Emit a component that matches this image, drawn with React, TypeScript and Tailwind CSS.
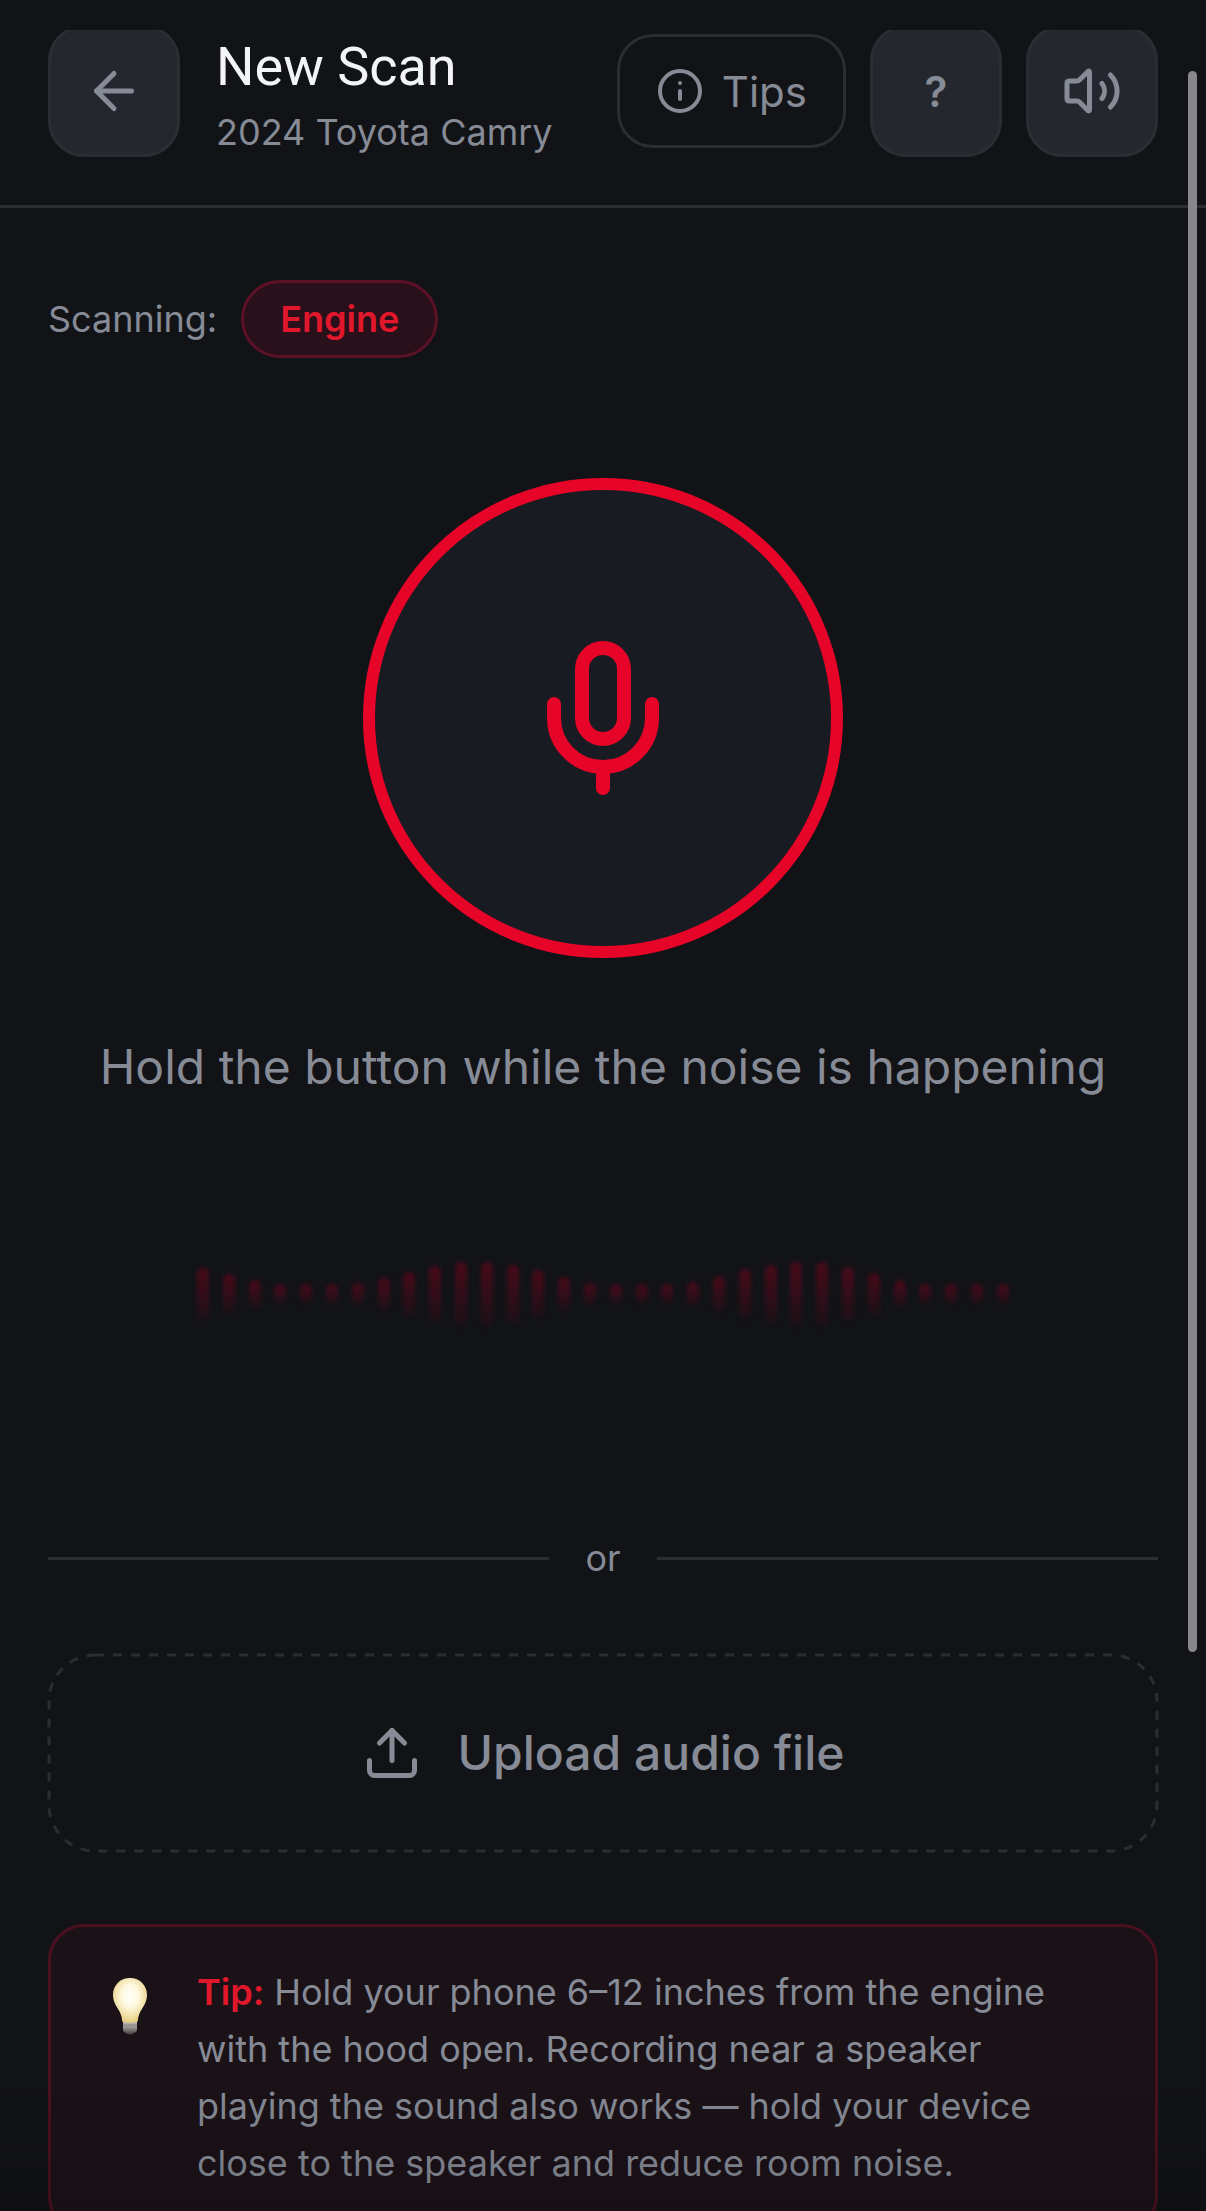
import { ArrowLeft, Info, Mic, Upload } from "lucide-react";

// Bar heights of the idle waveform, left to right.
const BARS = [
  52, 40, 28, 20, 20, 20, 22, 32, 44, 56, 64, 64, 58, 48, 34, 22,
  20, 20, 20, 24, 36, 50, 58, 64, 64, 54, 42, 28, 20, 20, 20, 20,
];

const iconButton =
  "flex size-[132px] shrink-0 items-center justify-center rounded-[36px] border-3 border-[#2b2d33] bg-[#24272e]";

function VolumeIcon() {
  return (
    <svg
      viewBox="0 0 60 60"
      className="size-[60px]"
      fill="none"
      stroke="currentColor"
      strokeWidth="5"
      strokeLinecap="round"
      strokeLinejoin="round"
      aria-hidden="true"
    >
      <path d="M26 10.400 17.400 19Q16.400 20 15 20H7.500Q5 20 5 22.500V37.500Q5 40 7.500 40H15Q16.400 40 17.400 41L26 49.600Q27.500 50.600 27.500 48.800V11.200Q27.500 9.400 26 10.400Z" />
      <path d="M40 22.500a12.500 12.500 0 0 1 0 15" />
      <path d="M48.400 14a22.500 22.500 0 0 1 0 32" />
    </svg>
  );
}

function BulbIcon() {
  return (
    <svg viewBox="0 0 62 62" className="mt-3 size-[62px] shrink-0" aria-hidden="true">
      <defs>
        <radialGradient id="glass" cx="0.5" cy="0.4" r="0.6">
          <stop offset="0" stopColor="#fffefa" />
          <stop offset="0.4" stopColor="#fefae0" />
          <stop offset="1" stopColor="#e6cc7e" />
        </radialGradient>
        <linearGradient id="base" x1="0" y1="0" x2="0" y2="1">
          <stop offset="0" stopColor="#cfcac4" />
          <stop offset="0.6" stopColor="#8d8988" />
          <stop offset="1" stopColor="#3b373a" />
        </linearGradient>
      </defs>
      <path d="M24 44h14v9q0 3-3 4l-2 1.500h-4L27 57q-3-1-3-4Z" fill="url(#base)" />
      <path d="M24 49h14M24 53h14" stroke="#77726f" strokeWidth="1" opacity="0.6" />
      <path
        d="M31 2C21 2 14 9.500 14 19c0 10 7 14 8.600 22 .4 2 .6 3 .6 4.500 7.600 1.800 8 1.800 15.600 0 0-1.500.2-2.500.6-4.500C41 33 48 29 48 19 48 9.500 41 2 31 2Z"
        fill="url(#glass)"
      />
    </svg>
  );
}

function Header() {
  return (
    <header className="overflow-hidden border-b-3 border-[#2b2d31] px-12 pb-12">
      <div className="-mt-[5px] flex items-center gap-6">
        <button type="button" aria-label="Back" className={iconButton}>
          <ArrowLeft size={60} strokeWidth={2} />
        </button>
        <div className="ml-3 min-w-0 flex-1">
          <h1 className="font-[Roboto,sans-serif] text-[54px] leading-[82px] text-[#f3f4f8]">
            New Scan
          </h1>
          <p className="text-4xl leading-12">2024 Toyota Camry</p>
        </div>
        <button
          type="button"
          className="flex h-[114px] shrink-0 items-center gap-[18px] rounded-[36px] border-3 border-[#2b2d31] px-9 text-[42px]"
        >
          <Info size={48} strokeWidth={2} />
          Tips
        </button>
        <button type="button" aria-label="Help" className={iconButton}>
          <span className="text-[42px] font-semibold">?</span>
        </button>
        <button type="button" aria-label="Sound" className={iconButton}>
          <VolumeIcon />
        </button>
      </div>
    </header>
  );
}

function Waveform() {
  return (
    <div className="mt-[70px] flex h-60 w-[812px] items-center justify-between self-center blur-[2px]">
      {BARS.map((height, i) => (
        <div
          key={i}
          className="w-3 rounded-full bg-linear-to-b from-[#4a0a1a] to-[#4a0a1a]/20"
          style={{ height }}
        />
      ))}
    </div>
  );
}

// Dashed outline with even 9px dashes, which border-dashed can't produce.
function DashedOutline() {
  return (
    <svg className="pointer-events-none absolute inset-0 size-full overflow-visible p-[1px]" aria-hidden="true">
      <rect
        width="100%"
        height="100%"
        rx="46"
        fill="none"
        stroke="#2b2d31"
        strokeWidth="3"
        strokeDasharray="9 9"
      />
    </svg>
  );
}

export default function App() {
  return (
    <div className="relative h-screen overflow-hidden bg-[#121317] pt-[30px] font-[Inter,sans-serif] text-[#868b96]">
      <Header />

      <main className="flex flex-col px-12 pt-[72px]">
        <div className="flex items-center gap-6 text-4xl leading-[72px]">
          <span>Scanning:</span>
          <span className="rounded-full border-3 border-[#5d1126] bg-[#29101a] px-9 font-semibold text-[#e1182c]">
            Engine
          </span>
        </div>

        <button
          type="button"
          aria-label="Hold to record"
          className="mt-[120px] flex size-[480px] items-center justify-center self-center rounded-full border-12 border-[#e60428] bg-[#181b21] text-[#e60428]"
        >
          <Mic size={168} strokeWidth={2} />
        </button>
        <p className="mt-[72px] text-center text-5xl leading-[74px]">
          Hold the button while the noise is happening
        </p>

        <Waveform />

        <div className="mt-[120px] flex items-center gap-9">
          <div className="h-[3px] flex-1 bg-[#2b2d31]" />
          <span className="text-4xl leading-12">or</span>
          <div className="h-[3px] flex-1 bg-[#2b2d31]" />
        </div>

        <button
          type="button"
          className="relative mt-[72px] flex h-[198px] items-center justify-center gap-9 rounded-[48px] text-5xl font-medium"
        >
          <DashedOutline />
          <Upload size={60} strokeWidth={2} />
          Upload audio file
        </button>

        <div className="mt-[72px] flex items-start gap-9 rounded-[36px] border-3 border-[#4b1020] bg-[#1b1218] px-12 py-[37px]">
          <BulbIcon />
          <p className="text-4xl leading-[57px]">
            <strong className="font-semibold text-[#e1182c]">Tip:</strong> Hold your phone 6–12
            inches from the engine with the hood open. Recording near a speaker playing the sound
            also works — hold your device close to the speaker and reduce room noise.
          </p>
        </div>
      </main>

      {/* Bottom fade and overlay scrollbar */}
      <div className="pointer-events-none absolute inset-x-0 bottom-0 h-36 bg-linear-to-b from-transparent to-black/15" />
      <div className="pointer-events-none absolute top-[71px] right-[9px] h-[1581px] w-[9px] rounded-full bg-[#88888a]" />
    </div>
  );
}
